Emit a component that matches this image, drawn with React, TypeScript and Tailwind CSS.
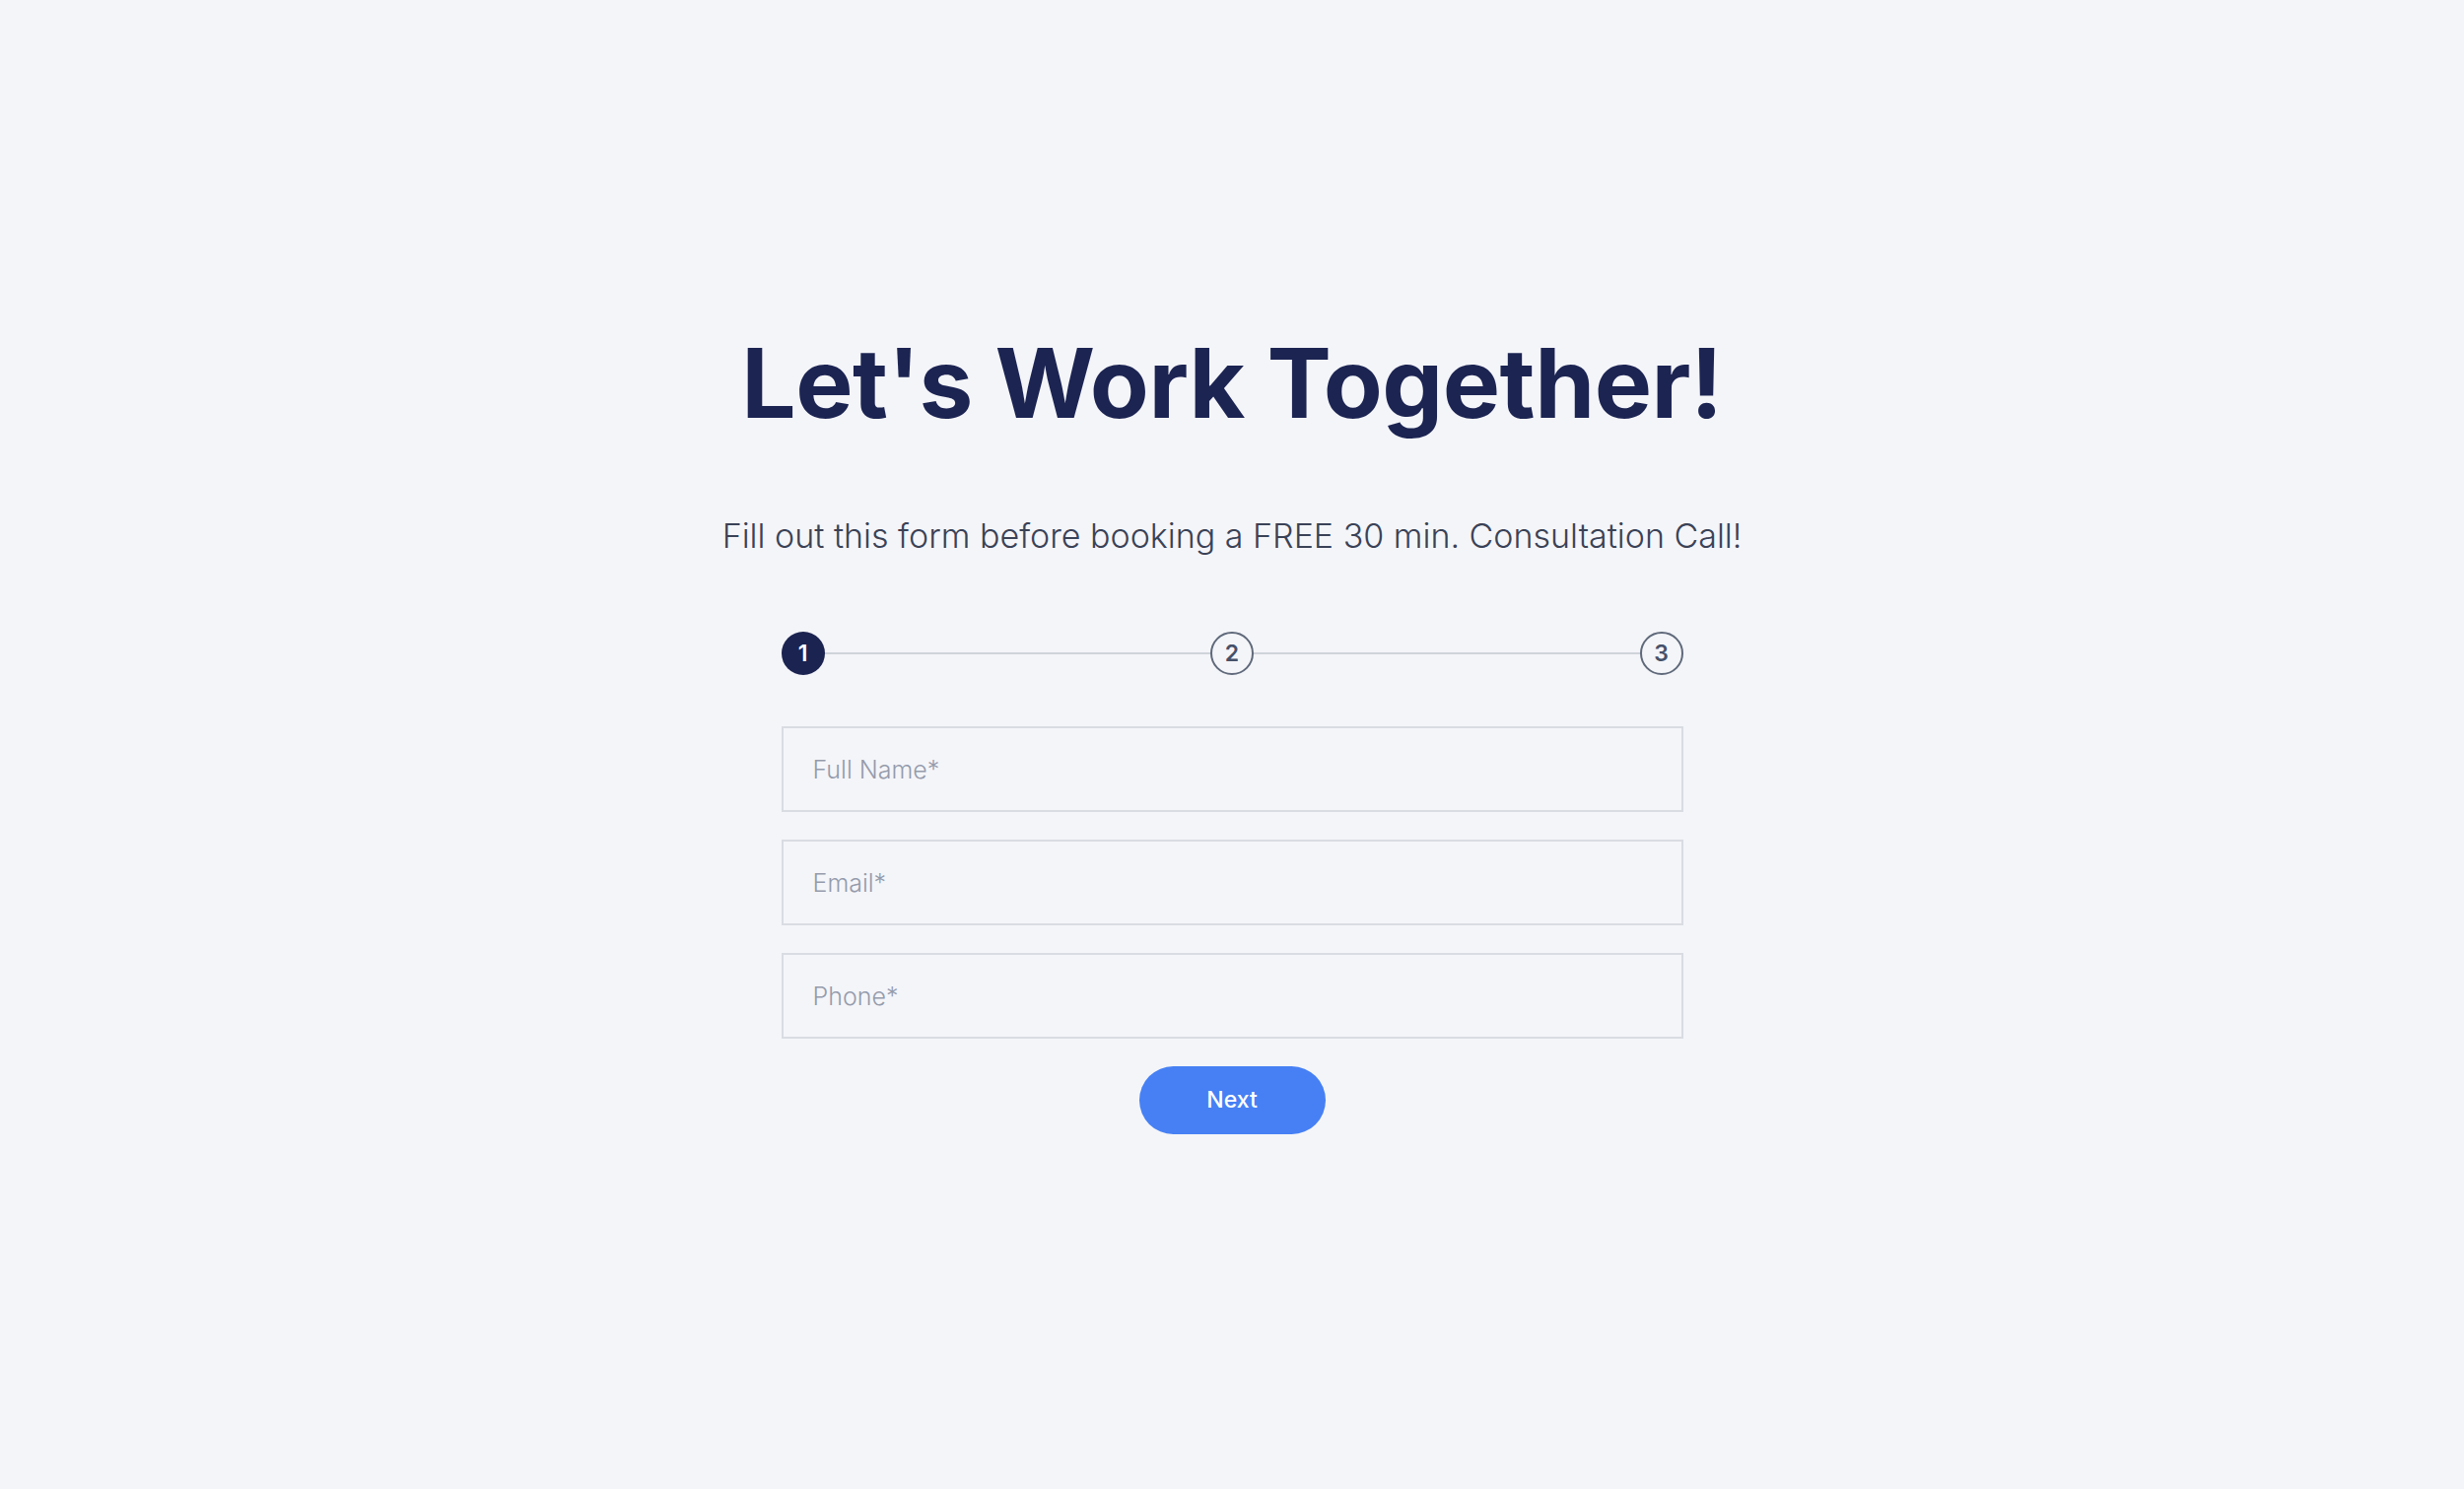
import { useState } from "react";

const steps = [1, 2, 3];

export default function App() {
  const [step] = useState(1);

  return (
    <div
      className="min-h-screen w-full bg-[#f4f5f9] flex flex-col items-center pt-[339px]"
      style={{ fontFamily: "Inter, 'Noto Sans', sans-serif" }}
    >
      <h1 className="text-[98px] leading-[100px] font-bold tracking-[-0.5px] text-[#1c2452]">
        Let's Work Together!
      </h1>
      <p className="mt-[85px] text-[34px] leading-[40px] font-light text-[#3a4256]">
        Fill out this form before booking a FREE 30 min. Consultation Call!
      </p>

      {/* stepper */}
      <div className="mt-[77px] w-[915px] flex items-center">
        {steps.map((n, i) => (
          <div key={n} className={`flex items-center ${i < steps.length - 1 ? "flex-1" : ""}`}>
            <div
              className={`w-[44px] h-[44px] shrink-0 rounded-full flex items-center justify-center text-[23px] font-semibold ${
                n === step
                  ? "bg-[#1b2350] text-white"
                  : "border-[2px] border-[#5f697a] text-[#465169]"
              }`}
            >
              {n}
            </div>
            {i < steps.length - 1 && <div className="flex-1 h-[2px] bg-[#cfd3da]" />}
          </div>
        ))}
      </div>

      <form className="mt-[52px] w-[915px] flex flex-col gap-[28px]" onSubmit={(e) => e.preventDefault()}>
        {["Full Name*", "Email*", "Phone*"].map((ph) => (
          <input
            key={ph}
            placeholder={ph}
            className="h-[87px] w-full border-[2px] border-[#d9dce2] bg-[#f4f5f9] px-[30px] text-[25px] font-light text-[#3a4256] placeholder:text-[#959bab] outline-none"
          />
        ))}
        <div className="flex justify-center">
          <button
            type="submit"
            className="w-[189px] h-[69px] rounded-full bg-[#4680f4] text-white text-[23px] font-medium"
          >
            Next
          </button>
        </div>
      </form>
    </div>
  );
}
